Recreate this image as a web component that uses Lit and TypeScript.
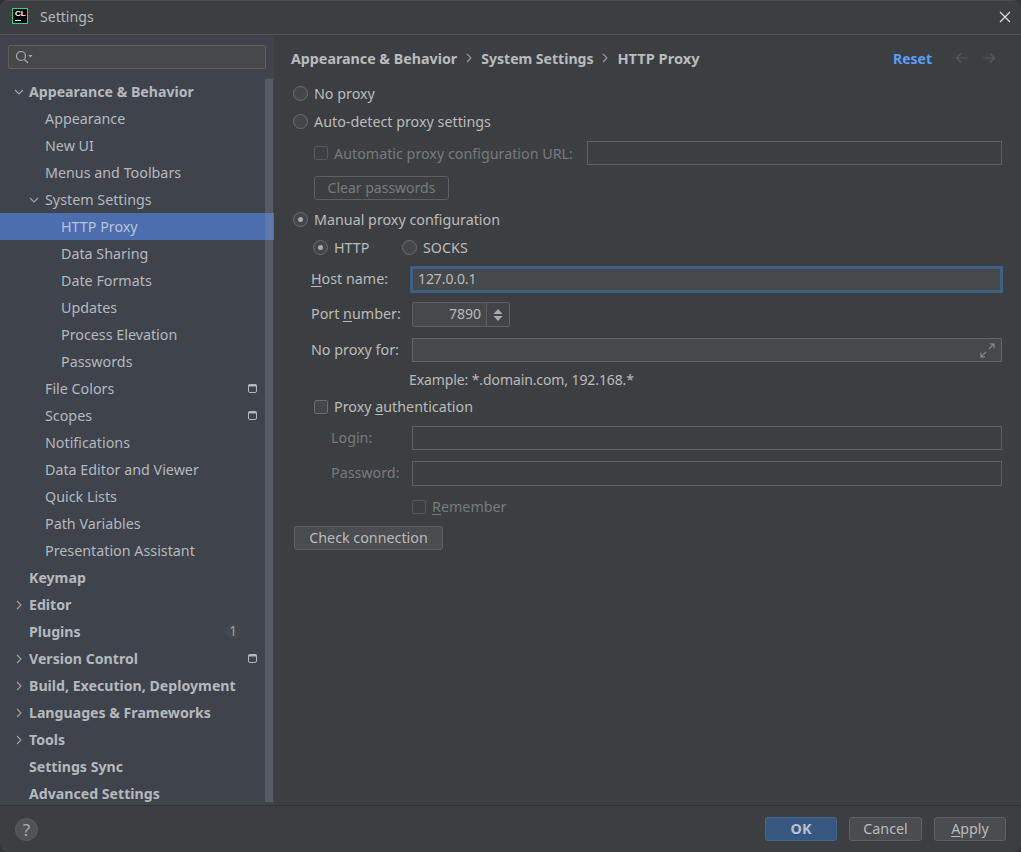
import { LitElement, html, css, svg } from "lit";
import { customElement } from "lit/decorators.js";

type Node = { t: string; lv: number; bold?: boolean; arrow?: "d" | "r"; sel?: boolean; box?: boolean; badge?: string };
const tree: Node[] = [
  { t: "Appearance & Behavior", lv: 0, bold: true, arrow: "d" },
  { t: "Appearance", lv: 1 },
  { t: "New UI", lv: 1 },
  { t: "Menus and Toolbars", lv: 1 },
  { t: "System Settings", lv: 1, arrow: "d" },
  { t: "HTTP Proxy", lv: 2, sel: true },
  { t: "Data Sharing", lv: 2 },
  { t: "Date Formats", lv: 2 },
  { t: "Updates", lv: 2 },
  { t: "Process Elevation", lv: 2 },
  { t: "Passwords", lv: 2 },
  { t: "File Colors", lv: 1, box: true },
  { t: "Scopes", lv: 1, box: true },
  { t: "Notifications", lv: 1 },
  { t: "Data Editor and Viewer", lv: 1 },
  { t: "Quick Lists", lv: 1 },
  { t: "Path Variables", lv: 1 },
  { t: "Presentation Assistant", lv: 1 },
  { t: "Keymap", lv: 0, bold: true },
  { t: "Editor", lv: 0, bold: true, arrow: "r" },
  { t: "Plugins", lv: 0, bold: true, badge: "1" },
  { t: "Version Control", lv: 0, bold: true, arrow: "r", box: true },
  { t: "Build, Execution, Deployment", lv: 0, bold: true, arrow: "r" },
  { t: "Languages & Frameworks", lv: 0, bold: true, arrow: "r" },
  { t: "Tools", lv: 0, bold: true, arrow: "r" },
  { t: "Settings Sync", lv: 0, bold: true },
  { t: "Advanced Settings", lv: 0, bold: true },
];

const chevD = svg`<path d="M1 3 L5 7 L9 3" fill="none" stroke="#a0a4a8" stroke-width="1.1"/>`;
const chevR = svg`<path d="M3 1 L7 5 L3 9" fill="none" stroke="#a0a4a8" stroke-width="1.1"/>`;

@customElement("app-root")
export class AppRoot extends LitElement {
  static styles = css`
    :host {
      display: block;
      width: 1021px;
      height: 852px;
      background: #2f3132;
      font-family: "Noto Sans", "Open Sans", sans-serif;
      font-size: 14.3px;
      color: #bbbbbb;
      overflow: hidden;
    }
    * { box-sizing: border-box; }
    .win {
      width: 1021px;
      height: 852px;
      background: #3c3f41;
      border-radius: 8px;
      display: flex;
      flex-direction: column;
      overflow: hidden;
    }
    .title {
      height: 35px;
      flex: none;
      display: flex;
      align-items: center;
      padding: 0 10px 3px 12px;
      border-bottom: 1px solid #505253;
      border-top: 1px solid #4a4c4e;
    }
    .logo {
      width: 16px;
      height: 16px;
      background: #000;
      border: 1px solid #21d789;
      position: relative;
      flex: none;
      color: #fff;
      font: bold 8px/9px "Liberation Sans", sans-serif;
      padding-left: 2px;
      margin-right: 12px;
    }
    .logo i {
      position: absolute;
      left: 2px;
      bottom: 2px;
      width: 6px;
      height: 1px;
      background: #fff;
    }
    .title .name { flex: 1; color: #b4b8ba; font-size: 14.1px; padding-top: 1px; }
    .close { margin-top: 2px; }
    .mid { flex: 1; display: flex; min-height: 0; }
    .side {
      width: 274px;
      flex: none;
      background: #3e434c;
      position: relative;
      padding-top: 10px;
    }
    .search {
      margin: 0 0 0 8px;
      width: 258px;
      height: 24px;
      background: #45494a;
      border: 1px solid #5e6060;
      border-radius: 2px;
      display: flex;
      align-items: center;
      padding-left: 6px;
    }
    .tree { margin-top: 9px; }
    .row {
      height: 27px;
      display: flex;
      align-items: center;
      position: relative;
      color: #b4b9bd;
      white-space: nowrap;
      padding-right: 15px;
    }
    .row.bold { font-weight: 700; font-size: 14.15px; }
    .row.sel { background: #4b6eaf; color: #bbc3d1; }
    .lv0 { padding-left: 29px; }
    .lv1 { padding-left: 45px; }
    .lv2 { padding-left: 61px; }
    .row .arr { position: absolute; top: 9px; width: 10px; height: 10px; }
    .lv0 .arr { left: 14px; }
    .lv1 .arr { left: 29px; }
    .row .t { flex: 1; }
    .boxicon { position: absolute; left: 248px; top: 9px; }
    .badge {
      position: absolute;
      left: 225px;
      top: 5px;
      width: 16px;
      height: 16px;
      border-radius: 50%;
      background: #44474b;
      text-align: center;
      font-size: 13.5px;
      font-weight: 400;
      line-height: 16px;
      color: #a0a4a8;
    }
    .scroll {
      position: absolute;
      left: 265px;
      top: 44px;
      width: 8px;
      height: 723px;
      background: rgba(140, 145, 155, 0.3);
    }
    .main { flex: 1; padding-left: 17px; position: relative; }
    .crumb {
      height: 48px;
      display: flex;
      align-items: center;
      font-weight: 700;
      font-size: 14.25px;
      color: #b9bcbe;
      padding: 0 25px 2px 0;
    }
    .crumb .c2 { font-size: 14.05px; }
    .crumb .c3 { font-size: 14.6px; }
    .crumb .sep { width: 24px; display: flex; justify-content: center; }
    .crumb .grow { flex: 1; }
    .reset { color: #589df6; font-weight: 700; font-size: 14px; margin-right: 23px; }
    .nav { display: flex; gap: 13px; }
    .r {
      display: flex;
      align-items: center;
      white-space: nowrap;
      height: 21px;
      padding-left: 2px;
    }
    .mt6 { margin-top: 6px; }
    .mt7 { margin-top: 7px; }
    .mt8 { margin-top: 8px; }
    .mt9 { margin-top: 9px; }
    .mt10 { margin-top: 10px; }
    .mt11 { margin-top: 11px; }
    .url { height: 24px; padding-left: 23px; width: 711px; }
    .urlfield { width: 415px; margin-left: auto; }
    .clear { margin: 11px 0 0 23px; width: 135px; }
    .sub { padding-left: 22px; }
    .http { width: 89px; display: flex; align-items: center; }
    .socks { margin-right: 6px; }
    .ex { padding-left: 118px; }
    .auth { padding-left: 23px; }
    .rem { padding-left: 121px; }
    .conn { margin: 9px 0 0 3px; width: 149px; }
    .radio {
      width: 15px;
      height: 15px;
      border-radius: 50%;
      border: 1px solid #6b6e70;
      background: #43474a;
      flex: none;
      margin-right: 6px;
      display: flex;
      align-items: center;
      justify-content: center;
    }
    .radio i { width: 5px; height: 5px; border-radius: 50%; background: #a9acae; }
    .check {
      width: 14px;
      height: 14px;
      border: 1px solid #6b6e70;
      border-radius: 2px;
      background: #43474a;
      flex: none;
      margin-right: 6px;
    }
    .check.off { border-color: #55585a; background: #3c3f41; }
    .dis { color: #777a7c; }
    u { text-underline-offset: 2px; text-decoration-thickness: 1px; }
    .input {
      height: 24px;
      background: #45494a;
      border: 1px solid #646464;
      display: flex;
      align-items: center;
      padding-left: 6px;
      color: #bbbbbb;
    }
    .input.off { background: #3c3f41; border-color: #5e6060; }
    .btn {
      height: 24px;
      border: 1px solid #5e6060;
      border-radius: 3px;
      background: #4a4d4f;
      display: flex;
      align-items: center;
      justify-content: center;
      color: #bbbbbb;
      flex: none;
      padding-bottom: 1px;
    }
    .btn.off { background: transparent; color: #777a7c; font-size: 14px; }
    .form { height: 24px; display: flex; align-items: center; padding-left: 20px; }
    .form.h27 { height: 27px; }
    .form .lab { width: 101px; flex: none; padding-bottom: 2px; }
    .form .lab.in { padding-left: 20px; }
    .form .input { width: 590px; }
    .form .input.focus {
      width: 593px;
      margin-left: -2px;
      height: 27px;
      flex: none;
      border: 3px solid #3d6185;
      padding: 0 0 2px 5px;
      font-size: 14px;
      letter-spacing: -0.1px;
    }
    .form.tall { height: 25px; }
    .form .input.tall { height: 25px; }
    .tight { font-size: 14px; letter-spacing: -0.1px; }
    .spin { display: flex; width: 98px; height: 25px; border: 1px solid #5e6060; border-radius: 2px; background: #45494a; font-size: 14px; }
    .spin .v { flex: 1; text-align: right; padding-right: 5px; line-height: 21px; border-right: 1px solid #5e6060; }
    .spin .s { width: 22px; display: flex; align-items: center; justify-content: center; background: #414446; border-radius: 0 2px 2px 0; }
    .expand { margin-left: auto; margin-right: 6px; display: block; }
    .foot {
      height: 47px;
      flex: none;
      border-top: 1px solid #323232;
      display: flex;
      align-items: center;
      padding: 0 15px;
      gap: 12px;
    }
    .help {
      width: 23px;
      height: 23px;
      border-radius: 50%;
      background: #4f5356;
      border: 1px solid #5c5f62;
      display: flex;
      align-items: center;
      justify-content: center;
      color: #a8abad;
      margin-right: auto;
      font-size: 17px;
    }
    .foot .btn { width: 72px; }
    .foot .btn.w73 { width: 73px; }
    .ok { background: #365880; border-color: #43688c; color: #bcc2c9; font-weight: 700; }
  `;

  private box() {
    return html`<svg class="boxicon" width="9" height="9" viewBox="0 0 9 9"><rect x="0.5" y="0.5" width="8" height="8" rx="1.5" fill="none" stroke="#b4b9bd"/><rect x="0.5" y="0.5" width="8" height="2" fill="#b4b9bd"/></svg>`;
  }

  private sep() {
    return html`<span class="sep"><svg width="6" height="10" viewBox="0 0 6 10"><path d="M1 1 L5 5 L1 9" fill="none" stroke="#9a9da0" stroke-width="1.1"/></svg></span>`;
  }

  render() {
    return html`<div class="win">
      <div class="title">
        <div class="logo">CL<i></i></div>
        <div class="name">Settings</div>
        <svg class="close" width="12" height="12" viewBox="0 0 12 12"><path d="M1 1 L11 11 M11 1 L1 11" stroke="#e4e4e4" stroke-width="1.1"/></svg>
      </div>
      <div class="mid">
        <div class="side">
          <div class="search">
            <svg width="18" height="14" viewBox="0 0 18 14"><circle cx="6" cy="6" r="4.5" fill="none" stroke="#a8abad" stroke-width="1.2"/><path d="M9.5 9.5 L13 13" stroke="#a8abad" stroke-width="1.3"/><path d="M13.5 5 L17.5 5 L15.5 7.5 Z" fill="#a8abad"/></svg>
          </div>
          <div class="tree">
            ${tree.map(
              (n) => html`<div class="row lv${n.lv} ${n.bold ? "bold" : ""} ${n.sel ? "sel" : ""}">
                ${n.arrow
                  ? html`<svg class="arr" viewBox="0 0 10 10">${n.arrow === "d" ? chevD : chevR}</svg>`
                  : ""}
                <span class="t">${n.t}</span>
                ${n.box ? this.box() : ""}
                ${n.badge ? html`<span class="badge">${n.badge}</span>` : ""}
              </div>`
            )}
          </div>
          <div class="scroll"></div>
        </div>
        <div class="main">
          <div class="crumb">
            <span>Appearance &amp; Behavior</span>${this.sep()}
            <span class="c2">System Settings</span>${this.sep()}
            <span class="c3">HTTP Proxy</span>
            <span class="grow"></span>
            <span class="reset">Reset</span>
            <span class="nav">
              <svg width="14" height="12" viewBox="0 0 14 12"><path d="M13 6 H1.5 M6 1.5 L1.5 6 L6 10.5" fill="none" stroke="#565a5c" stroke-width="1.2"/></svg>
              <svg width="14" height="12" viewBox="0 0 14 12"><path d="M1 6 H12.5 M8 1.5 L12.5 6 L8 10.5" fill="none" stroke="#565a5c" stroke-width="1.2"/></svg>
            </span>
          </div>
          <div class="r"><span class="radio"></span>No proxy</div>
          <div class="r mt7"><span class="radio"></span>Auto-detect proxy settings</div>
          <div class="r dis url mt9">
            <span class="check off"></span>Automatic proxy configuration URL:
            <div class="input off urlfield"></div>
          </div>
          <div class="btn off clear">Clear passwords</div>
          <div class="r mt9"><span class="radio"><i></i></span>Manual proxy configuration</div>
          <div class="r sub mt7">
            <span class="http"><span class="radio"><i></i></span>HTTP</span>
            <span class="radio socks"></span>SOCKS
          </div>
          <div class="form h27 mt8">
            <span class="lab"><u>H</u>ost name:</span>
            <div class="input focus">127.0.0.1</div>
          </div>
          <div class="form tall mt9">
            <span class="lab"><span>Port </span><u>n</u>umber:</span>
            <div class="spin">
              <div class="v">7890</div>
              <div class="s"><svg width="10" height="14" viewBox="0 0 10 14"><path d="M5 1 L9.5 6 H0.5 Z M5 13 L9.5 8 H0.5 Z" fill="#a8abad"/></svg></div>
            </div>
          </div>
          <div class="form mt11">
            <span class="lab">No proxy for:</span>
            <div class="input">
              <svg class="expand" width="15" height="15" viewBox="0 0 16 16"><path d="M9.5 6.5 L15 1 M10.5 1 H15 V5.5 M6.5 9.5 L1 15 M1 10.5 V15 H5.5" fill="none" stroke="#8c8f91" stroke-width="1.1"/></svg>
            </div>
          </div>
          <div class="r tight ex mt7">Example: *.domain.com, 192.168.*</div>
          <div class="r auth mt6"><span class="check"></span><span>Proxy <u>a</u>uthentication</span></div>
          <div class="form dis mt9">
            <span class="lab in">Login:</span><div class="input off"></div>
          </div>
          <div class="form dis tall mt11">
            <span class="lab in">Password:</span><div class="input off tall"></div>
          </div>
          <div class="r dis rem mt10"><span class="check off"></span><span><u>R</u>emember</span></div>
          <div class="btn conn">Check connection</div>
        </div>
      </div>
      <div class="foot">
        <div class="help">?</div>
        <div class="btn ok">OK</div>
        <div class="btn w73">Cancel</div>
        <div class="btn"><span><u>A</u>pply</span></div>
      </div>
    </div>`;
  }
}
